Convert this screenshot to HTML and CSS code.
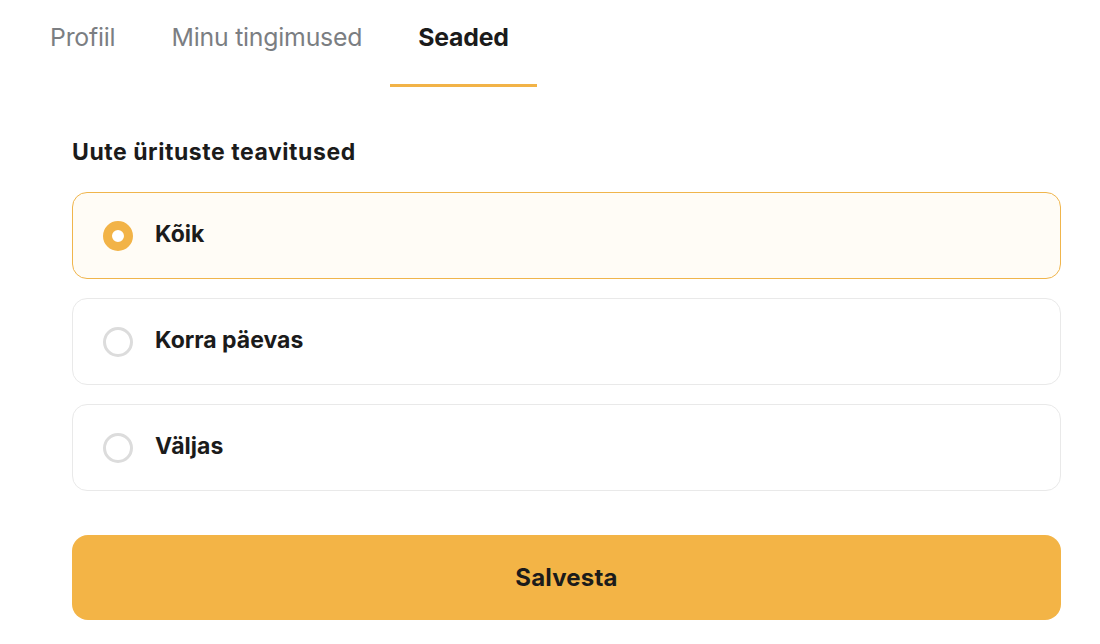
FILE: index.html
```html
<!DOCTYPE html>
<html lang="et">
<head>
<meta charset="utf-8">
<title>Seaded</title>
<link rel="stylesheet" href="styles.css">
</head>
<body>
<nav class="tabs">
  <a class="tab">Profiil</a>
  <a class="tab">Minu tingimused</a>
  <a class="tab active">Seaded</a>
</nav>
<main class="content">
  <h2 class="title">Uute ürituste teavitused</h2>
  <div class="options">
    <label class="option selected"><span class="radio"></span><span class="label">Kõik</span></label>
    <label class="option"><span class="radio"></span><span class="label">Korra päevas</span></label>
    <label class="option"><span class="radio"></span><span class="label">Väljas</span></label>
  </div>
  <button class="save">Salvesta</button>
</main>
</body>
</html>
```

FILE: styles.css
```css
html, body {
  margin: 0;
  padding: 0;
  background: #ffffff;
  font-family: "Inter", "Noto Sans", sans-serif;
  color: #1b1b1b;
}
.tabs {
  display: flex;
  padding-left: 22px;
}
.tab {
  display: block;
  padding: 20px 28px 0;
  height: 64px;
  font-size: 24.8px;
  line-height: 34px;
  color: #7b7e82;
  letter-spacing: -0.2px;
  border-bottom: 3px solid transparent;
}
.tab.active {
  color: #1b1b1b;
  font-weight: 700;
  border-bottom-color: #f2b347;
}
.content {
  margin-left: 72px;
  width: 989px;
  padding-top: 51px;
}
.title {
  margin: 0 0 26px;
  font-size: 23px;
  line-height: 28px;
  font-weight: 700;
  letter-spacing: 0.55px;
}
.options {
  display: flex;
  flex-direction: column;
  gap: 19px;
}
.option {
  display: flex;
  align-items: center;
  gap: 22px;
  height: 87px;
  box-sizing: border-box;
  padding: 0 28px 0 30px;
  border: 1.5px solid #e9e9e9;
  border-radius: 15px;
  background: #ffffff;
}
.option.selected {
  border-color: #f0b54c;
  background: #fffcf6;
}
.radio {
  width: 30px;
  height: 30px;
  box-sizing: border-box;
  border-radius: 50%;
  border: 3px solid #dcdcdc;
  background: #fff;
  flex: none;
}
.option.selected .radio {
  border: 9px solid #f2b347;
}
.label {
  font-size: 23px;
  font-weight: 700;
  margin-top: -3px;
}
.save {
  display: block;
  width: 100%;
  height: 85px;
  margin-top: 44px;
  border: none;
  border-radius: 16px;
  background: #f3b446;
  font-family: inherit;
  font-size: 24px;
  font-weight: 700;
  color: #1b1b1b;
  letter-spacing: 0.2px;
}
```
